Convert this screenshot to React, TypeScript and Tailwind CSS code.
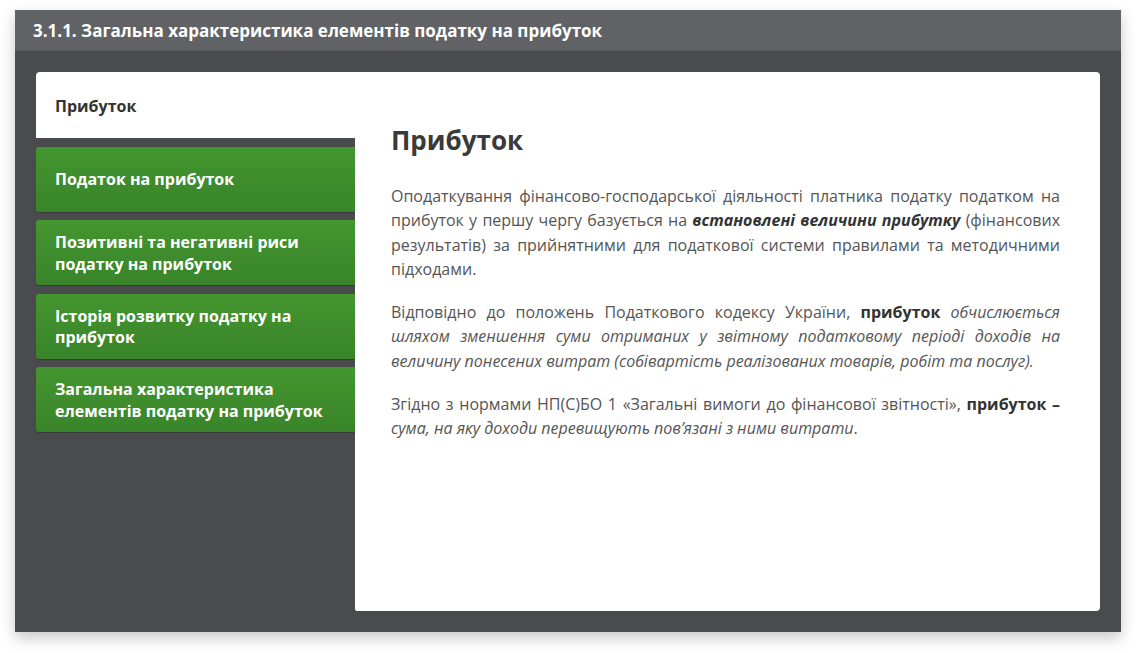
const menu = [
  ['Податок на прибуток'],
  ['Позитивні та негативні риси', 'податку на прибуток'],
  ['Історія розвитку податку на', 'прибуток'],
  ['Загальна характеристика', 'елементів податку на прибуток'],
];

function MenuItem({ lines }: { lines: string[] }) {
  return (
    <div className="h-[65px] flex items-center px-[19px] pt-[2px] rounded-l-[3px] bg-gradient-to-b from-[#44962f] to-[#39842a] shadow-[0_1px_1px_rgba(0,0,0,0.25)] text-white text-[16px] font-bold leading-[21.5px]">
      <div>
        {lines.map((l) => (
          <div key={l}>{l}</div>
        ))}
      </div>
    </div>
  );
}

export default function App() {
  return (
    <div className="w-[1136px] h-[653px] bg-white pt-[10px] pl-[15px] font-['Open_Sans',sans-serif]">
      <div className="w-[1106px] h-[622px] flex flex-col bg-[#4a4b4d] shadow-[0_6px_14px_rgba(0,0,0,0.22)]">
        <div className="h-[41px] shrink-0 bg-[#606265] border-b border-[#55575a] flex items-center px-[18px] pt-[2px] text-white text-[17px] font-bold">
          3.1.1. Загальна характеристика елементів податку на прибуток
        </div>
        <div className="flex-1 p-[21px] flex">
          <div className="w-[319px] shrink-0 flex flex-col gap-[8.6px]">
            <div className="h-[66px] bg-white rounded-tl-[4px] flex items-center px-[19px] pt-[2px] text-[#333] text-[16px] font-bold">
              Прибуток
            </div>
            {menu.map((lines) => (
              <MenuItem key={lines.join(' ')} lines={lines} />
            ))}
          </div>
          <div className="flex-1 bg-white rounded-r-[4px] rounded-bl-[2px] pt-[50px] pl-[36px] pr-[40px] text-[#555] text-[16px] leading-[24.3px]">
            <h1 className="text-[26px] font-bold text-[#3a3a3a] leading-[36px] mb-[26px]">Прибуток</h1>
            <p className="text-justify mb-[19px]">
              Оподаткування фінансово-господарської діяльності платника податку податком на прибуток у першу
              чергу базується на <b className="italic text-[#333]">встановлені величини прибутку</b> (фінансових
              результатів) за прийнятними для податкової системи правилами та методичними підходами.
            </p>
            <p className="text-justify mb-[19px]">
              Відповідно до положень Податкового кодексу України, <b className="text-[#333]">прибуток</b>{' '}
              <i>
                обчислюється шляхом зменшення суми отриманих у звітному податковому періоді доходів на величину
                понесених витрат (собівартість реалізованих товарів, робіт та послуг).
              </i>
            </p>
            <p className="text-justify">
              Згідно з нормами НП(С)БО 1 «Загальні вимоги до фінансової звітності», <b className="text-[#333]">прибуток –</b>{' '}
              <i>сума, на яку доходи перевищують пов’язані з ними витрати</i>.
            </p>
          </div>
        </div>
      </div>
    </div>
  );
}
